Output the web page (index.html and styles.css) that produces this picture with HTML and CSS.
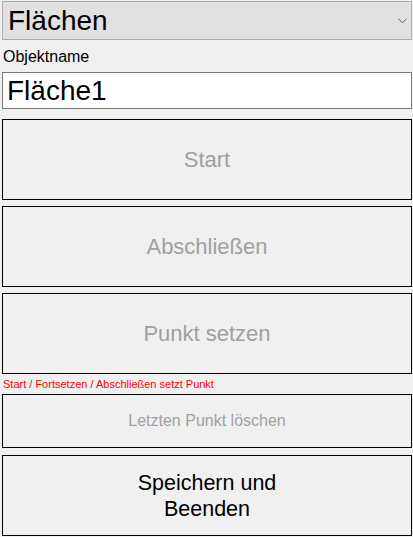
FILE: index.html
```html
<!DOCTYPE html>
<html lang="de">
<head>
<meta charset="utf-8">
<title>Flächen</title>
<link rel="stylesheet" href="styles.css">
</head>
<body>
<div class="form">
  <div class="combo">
    <span class="combo-text">Flächen</span>
    <svg class="chevron" width="9" height="6" viewBox="0 0 9 6"><path d="M0.5 0.8 L4.5 4.8 L8.5 0.8" fill="none" stroke="#5a5a5a" stroke-width="1"/></svg>
  </div>
  <div class="lbl">Objektname</div>
  <div class="textbox">Fläche1</div>
  <div class="btn big disabled">Start</div>
  <div class="btn big disabled gap">Abschließen</div>
  <div class="btn big disabled gap">Punkt setzen</div>
  <div class="hint">Start / Fortsetzen / Abschließen setzt Punkt</div>
  <div class="btn small disabled">Letzten Punkt löschen</div>
  <div class="btn big save">Speichern und<br>Beenden</div>
</div>
</body>
</html>
```
FILE: styles.css
```css
html, body {
  margin: 0;
  padding: 0;
  background: #f0f0f0;
}
body {
  font-family: "Liberation Sans", Arial, sans-serif;
  color: #000;
}
.form {
  display: flex;
  flex-direction: column;
  width: 410px;
  padding: 1px 0 0 2px;
}
.combo {
  box-sizing: border-box;
  height: 39px;
  border: 1px solid #adadad;
  background: #e1e1e1;
  display: flex;
  align-items: center;
  justify-content: space-between;
  padding: 0 4px 0 5px;
  font-size: 28px;
}
.combo-text {
  line-height: 32px;
}
.chevron {
  display: block;
  margin-top: 1px;
}
.lbl {
  font-size: 16px;
  line-height: 17px;
  height: 17px;
  margin-top: 8px;
  padding-left: 1px;
}
.textbox {
  box-sizing: border-box;
  height: 37px;
  margin-top: 7px;
  border: 1px solid #7a7a7a;
  background: #fff;
  font-size: 28px;
  line-height: 32px;
  display: flex;
  align-items: center;
  padding-left: 4px;
}
.btn {
  box-sizing: border-box;
  border: 1px solid #000;
  background: #f0f0f0;
  display: flex;
  align-items: center;
  justify-content: center;
  text-align: center;
}
.big {
  height: 81px;
  font-size: 22px;
  line-height: 26px;
}
.textbox + .big {
  margin-top: 10px;
}
.gap {
  margin-top: 6px;
}
.small {
  height: 54px;
  font-size: 16px;
}
.disabled {
  color: #a0a0a0;
}
.save {
  margin-top: 7px;
  color: #000;
  font-size: 21.5px;
}
.hint {
  height: 20px;
  font-size: 11px;
  line-height: 20px;
  color: #ff0000;
  padding-left: 1px;
}
```
